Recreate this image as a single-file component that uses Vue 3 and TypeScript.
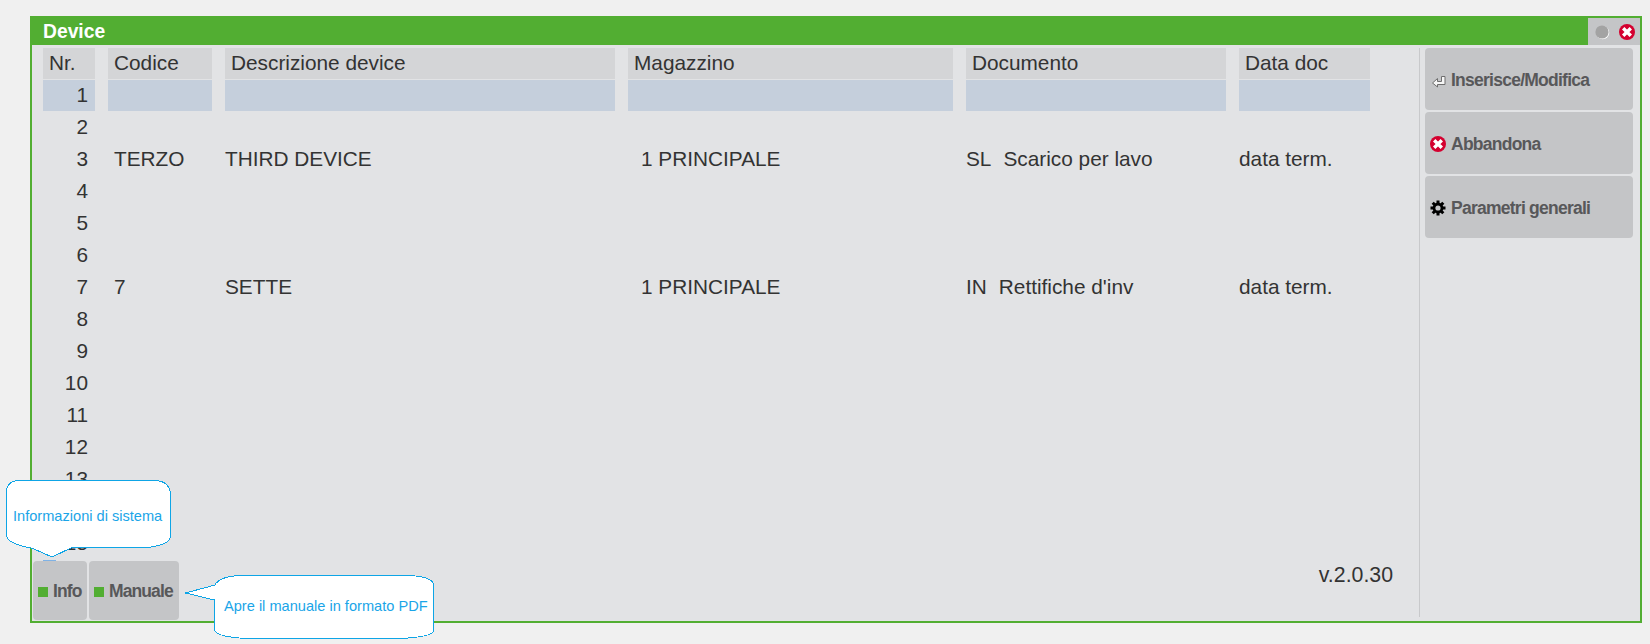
<script setup lang="ts">
interface Row {
  nr: number
  codice?: string
  descr?: string
  magazzino?: string
  docCode?: string
  docName?: string
  data?: string
}

const filled: Record<number, Row> = {
  3: { nr: 3, codice: 'TERZO', descr: 'THIRD DEVICE', magazzino: '1 PRINCIPALE', docCode: 'SL', docName: 'Scarico per lavo', data: 'data term.' },
  7: { nr: 7, codice: '7', descr: 'SETTE', magazzino: '1 PRINCIPALE', docCode: 'IN', docName: "Rettifiche d'inv", data: 'data term.' },
}

const rows: Row[] = Array.from({ length: 15 }, (_, i) => filled[i + 1] ?? { nr: i + 1 })
</script>

<template>
  <div class="page">
    <div class="window">
      <div class="titlebar">
        <span class="title">Device</span>
        <div class="win-controls">
          <svg width="16" height="16" viewBox="0 0 16 16">
            <circle cx="8.7" cy="8.7" r="6.6" fill="#fff" />
            <circle cx="8" cy="8" r="6.6" fill="#a3a3a3" />
          </svg>
          <svg width="16" height="16" viewBox="0 0 16 16">
            <circle cx="8" cy="8" r="8" fill="#d4002f" />
            <path d="M4.2 4.2l7.6 7.6M11.8 4.2l-7.6 7.6" stroke="#fff" stroke-width="3.4" />
          </svg>
        </div>
      </div>
      <div class="body">
        <div class="main">
          <div class="table">
            <div class="grid-row head">
              <div class="cell">Nr.</div>
              <div class="cell">Codice</div>
              <div class="cell">Descrizione device</div>
              <div class="cell">Magazzino</div>
              <div class="cell">Documento</div>
              <div class="cell">Data doc</div>
            </div>
            <div v-for="r in rows" :key="r.nr" class="grid-row" :class="{ active: r.nr === 1 }">
              <div class="cell num">{{ r.nr }}</div>
              <div class="cell code">{{ r.codice }}</div>
              <div class="cell">{{ r.descr }}</div>
              <div class="cell mag">{{ r.magazzino }}</div>
              <div class="cell">
                <span v-if="r.docCode" class="doc-code">{{ r.docCode }}</span>{{ r.docName }}
              </div>
              <div class="cell">{{ r.data }}</div>
            </div>
          </div>
          <i class="sliver" />
          <div class="footer">
            <div class="foot-buttons">
              <button class="btn foot info"><i class="led" />Info</button>
              <button class="btn foot manual"><i class="led" />Manuale</button>
            </div>
            <span class="version">v.2.0.30</span>
          </div>
        </div>
        <div class="side">
          <button class="btn action">
            <svg class="ic" width="16" height="16" viewBox="0 0 16 16">
              <path d="M2.5 11L7.5 6.5V9.5H11.5V4.5H15V12.5H7.5V15Z" fill="#f6f6f6" stroke="#6e6e6e" stroke-width="1" stroke-linejoin="round" />
            </svg>Inserisce/Modifica
          </button>
          <button class="btn action">
            <svg class="ic" width="16" height="16" viewBox="0 0 16 16">
              <circle cx="8" cy="8" r="8" fill="#d4002f" />
              <path d="M4.2 4.2l7.6 7.6M11.8 4.2l-7.6 7.6" stroke="#fff" stroke-width="3.4" />
            </svg>Abbandona
          </button>
          <button class="btn action">
            <svg class="ic" width="16" height="16" viewBox="0 0 16 16">
              <path d="M8 .5v15M.5 8h15M2.7 2.7l10.6 10.6M13.3 2.7L2.7 13.3" stroke="#000" stroke-width="3" />
              <circle cx="8" cy="8" r="5.4" fill="#000" />
              <circle cx="8" cy="8" r="2.6" fill="#c4c5c7" />
            </svg>Parametri generali
          </button>
        </div>
      </div>
    </div>

    <div class="tip tip-info">
      <svg class="tip-shape" width="170" height="84" viewBox="0 0 170 84">
        <path d="M1.5 13Q1.5 2 14 1.5H150Q165 2 165.5 16V57Q165 66 142 68.5H67L47 78L28 69.5Q3 65 1.5 57Z" />
      </svg>
      <span class="tip-text">Informazioni di sistema</span>
    </div>
    <div class="tip tip-manual">
      <svg class="tip-shape" width="252" height="68" viewBox="0 0 252 68">
        <path d="M31 10Q38 2 56 1.5H223Q247 2 249.5 10V57Q248 63 216 64.5H63Q32 63 30.5 56V26L1.5 19L31 11Z" />
      </svg>
      <span class="tip-text">Apre il manuale in formato PDF</span>
    </div>
  </div>
</template>

<style>
html,
body {
  margin: 0;
  background: #f0f0f0;
}
</style>

<style scoped>
.page {
  position: relative;
  height: 644px;
  padding: 16px 8px 0 30px;
  box-sizing: border-box;
  font-family: "Liberation Sans", Arial, sans-serif;
  color: #333;
  overflow: hidden;
}

.window {
  height: 607px;
  border: 2px solid #52ae32;
  border-top: none;
  box-sizing: border-box;
  background: #e2e3e5;
  display: flex;
  flex-direction: column;
}

.titlebar {
  height: 29px;
  margin: 0 -2px;
  background: #52ae32;
  display: flex;
  justify-content: space-between;
  padding: 2px 2px 0 13px;
  box-sizing: border-box;
  flex-shrink: 0;
}

.title {
  color: #fff;
  font-weight: 700;
  font-size: 19.3px;
  line-height: 27px;
}

.win-controls {
  width: 52px;
  height: 27px;
  background: #c4c5c7;
  display: flex;
  align-items: center;
  justify-content: flex-end;
  gap: 9px;
  padding: 0 5px;
  box-sizing: border-box;
}

.body {
  flex: 1;
  min-height: 0;
  display: flex;
  padding-top: 3px;
}

.main {
  width: 1387px;
  flex-shrink: 0;
  position: relative;
  display: flex;
  flex-direction: column;
  margin-bottom: 1px;
  overflow: hidden;
}

.table {
  padding-left: 11px;
  height: 513px;
  flex-shrink: 0;
  overflow: hidden;
}

.sliver {
  position: absolute;
  left: 11px;
  top: 512px;
  width: 13px;
  height: 1px;
  background: #7fb2e5;
}

.grid-row {
  display: grid;
  grid-template-columns: 52px 104px 390px 325px 260px 131px;
  column-gap: 13px;
  height: 32px;
  font-size: 20.8px;
  line-height: 30px;
  color: #333;
}

.head .cell {
  background: #d4d5d7;
  padding-left: 6px;
  height: 31px;
  font-size: 20.8px;
  box-sizing: border-box;
}

.active .cell {
  background: #c5cfdc;
  height: 31px;
}

.cell {
  white-space: nowrap;
  min-width: 0;
}

.num {
  text-align: right;
  padding-right: 7px;
}

.code {
  padding-left: 6px;
}

.mag {
  padding-left: 13px;
}

.doc-code {
  display: inline-block;
  margin-right: 12px;
}

.footer {
  display: flex;
  justify-content: space-between;
  align-items: flex-end;
  padding: 0 26px 0 1px;
  height: 59px;
  flex-shrink: 0;
}

.foot-buttons {
  display: flex;
  gap: 2px;
}

.btn {
  border: none;
  background: #c4c5c7;
  border-radius: 4px;
  font-family: "Liberation Sans", Arial, sans-serif;
  font-weight: 700;
  color: #58585a;
  display: flex;
  align-items: center;
  padding: 2px 0 0;
  white-space: nowrap;
}

.foot {
  height: 59px;
  font-size: 17.5px;
  padding-left: 5px;
  letter-spacing: -0.9px;
}

.info {
  width: 54px;
}

.manual {
  width: 90px;
}

.led {
  width: 10px;
  height: 10px;
  background: #52ae32;
  margin-right: 5px;
  flex-shrink: 0;
}

.version {
  font-size: 21.3px;
  line-height: 24px;
  margin-bottom: 33px;
  color: #333;
}

.side {
  flex: 1;
  padding: 0 7px 0 5px;
  margin-bottom: 4px;
  border-left: 1px solid #c8c9cb;
  display: flex;
  flex-direction: column;
  gap: 2px;
}

.action {
  height: 62px;
  font-size: 17.5px;
  padding-left: 5px;
  letter-spacing: -0.75px;
}

.ic {
  margin-right: 5px;
  flex-shrink: 0;
}

.tip {
  position: absolute;
  display: flex;
  align-items: center;
  color: #1aa5e8;
  font-size: 14.6px;
}

.tip-shape {
  position: absolute;
  left: 0;
  top: 0;
  shape-rendering: crispEdges;
}

.tip-shape path {
  fill: #fff;
  stroke: #0ea5e6;
  stroke-width: 1;
}

.tip-text {
  position: relative;
  white-space: nowrap;
}

.tip-info {
  left: 5px;
  top: 479px;
  width: 170px;
  height: 74px;
  padding-left: 8px;
  box-sizing: border-box;
}

.tip-manual {
  left: 184px;
  top: 574px;
  width: 252px;
  height: 64px;
  padding-left: 40px;
  box-sizing: border-box;
}
</style>
